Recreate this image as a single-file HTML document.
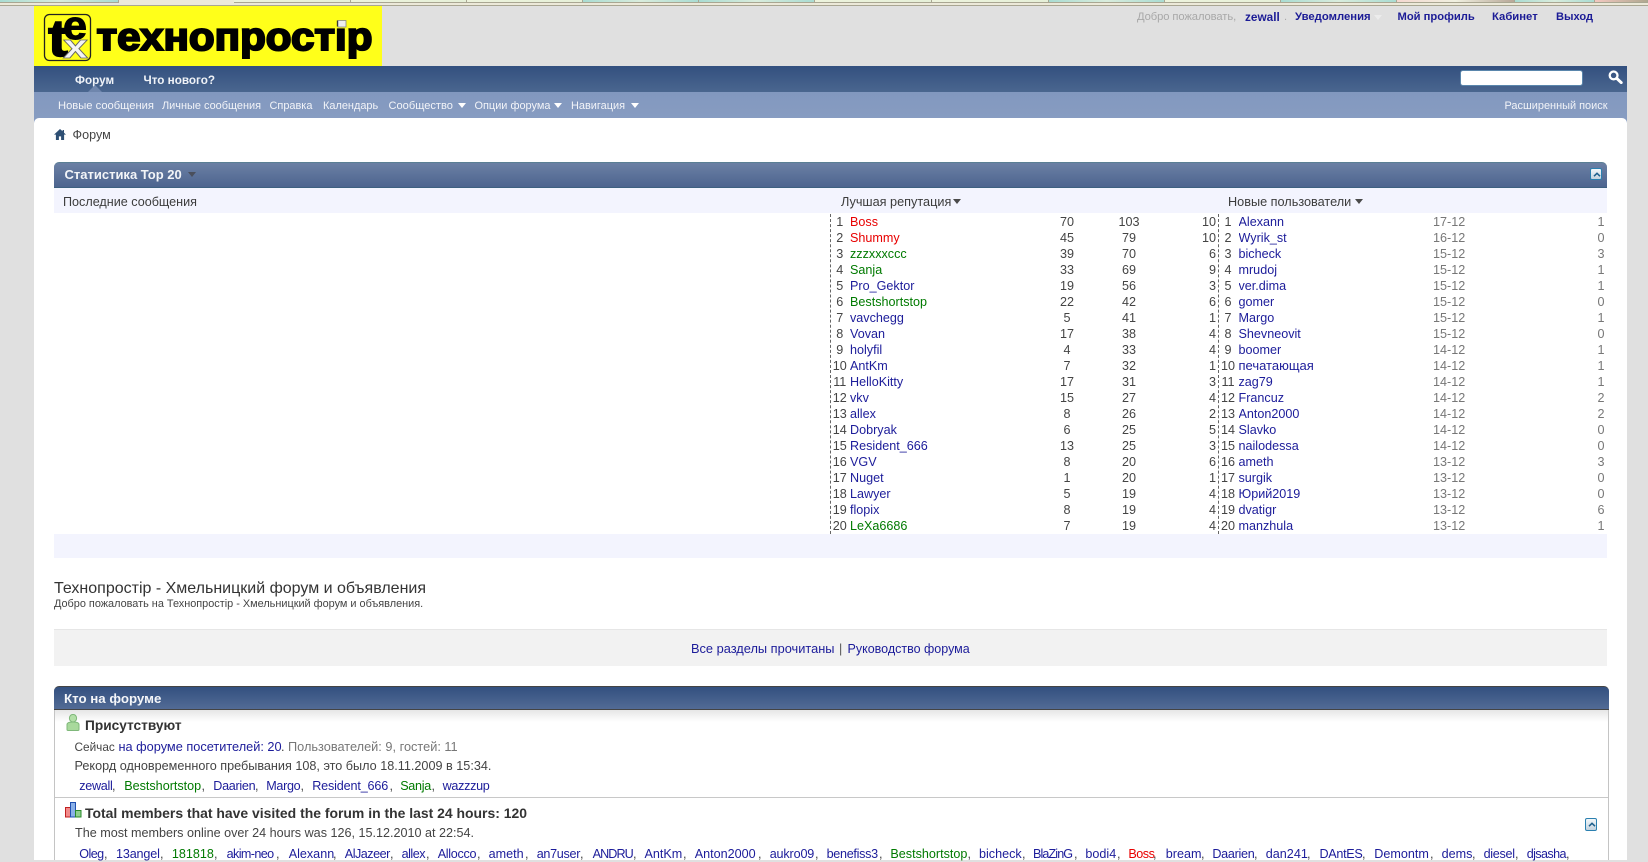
<!DOCTYPE html>
<html lang="ru"><head><meta charset="utf-8"><title>Технопростір - Хмельницкий форум и объявления</title>
<style>
html,body{margin:0;padding:0;width:1648px;height:860px;overflow:hidden;background:#e0e0e0;font-family:"Liberation Sans","Noto Sans CJK SC",sans-serif;font-size:12.6px;color:#444}
*{box-sizing:border-box}
a{color:#1c1c9a;text-decoration:none}
.g{color:#007a00}.r{color:#e80000}
.b{position:absolute}
.t{position:absolute;white-space:nowrap;line-height:16px;height:16px}
.m{letter-spacing:-.3px}
.mm{letter-spacing:-.9px}
#strip{position:absolute;left:0;top:0;width:1648px;height:6px;background:#ece9d9;border-bottom:1px solid #a9a692}
#strip i{position:absolute;top:0;height:3px;border-bottom:1px solid #a9a692;border-right:1px solid #a9a692}
.te{background:linear-gradient(90deg,#a9dcd2,#d9ecdc 50%,#a9dcd2)}
.pa{background:linear-gradient(90deg,#edf3dc,#e6f0d8)}
#nav{left:34px;top:66px;width:1593px;height:26px;background:linear-gradient(#33507f,#4a668f)}
#sub{left:34px;top:92px;width:1593px;height:26px;background:linear-gradient(#8298bf,#879cc1)}
#wr{left:34px;top:118px;width:1593px;height:742px;background:#fff;border-radius:5px 5px 0 0}
#wb{left:34px;top:116px;width:1593px;height:8px;background:#879cc1}
.n{font-weight:bold;color:#f0f3f8;font-size:11.7px}
.s{color:#f2f4f8;font-size:10.95px}
.tri{position:absolute;width:0;height:0;border-left:4px solid transparent;border-right:4px solid transparent;border-top:5px solid #fff}
.top{font-weight:bold;color:#1c1c96;font-size:11.2px}
table{position:absolute;border-collapse:collapse;table-layout:fixed;font-size:12.6px}
td{padding:0;height:16px;line-height:16px;white-space:nowrap;overflow:hidden}
.c{text-align:center}.rt{text-align:right}
#t1 td:first-child,#t2 td:first-child{text-align:center}
.dl{position:absolute;top:214px;height:320px;width:0;border-left:1px dashed #666}
.gr td{color:#777}.gr td a{color:#1c1c9a}.gr td:first-child{color:#444}
.col{position:absolute;width:12px;height:12px;border:1px solid #2b80b0;border-radius:2px;background:linear-gradient(#f2f7fa,#c4d3df)}
.col svg{position:absolute;left:1px;top:1px}
</style></head><body>

<div id="strip">
<i class="te" style="left:0;width:119px"></i>
<i class="pa" style="left:234px;width:117px"></i><i class="pa" style="left:351px;width:116px"></i><i class="pa" style="left:467px;width:116px"></i>
<i class="te" style="left:583px;width:116px"></i><i class="te" style="left:699px;width:116px"></i><i class="pa" style="left:815px;width:117px"></i>
<i class="pa" style="left:932px;width:117px"></i><i class="te" style="left:1049px;width:116px"></i><i class="pa" style="left:1165px;width:116px"></i>
<i class="te" style="left:1281px;width:116px"></i><i style="left:1397px;width:118px;background:linear-gradient(90deg,#f4d8d0,#f0f0e0 50%,#b8a898)"></i>
<i class="te" style="left:1515px;width:80px"></i><i style="left:1595px;width:53px;background:linear-gradient(90deg,#f3c8c0,#b0a890)"></i>
</div>

<svg class="b" style="left:34px;top:6px" width="348" height="60" viewBox="34 6 348 60">
<rect x="34" y="6" width="348" height="60" fill="#ffff1a"/>
<rect x="44.5" y="14.5" width="46" height="46" rx="5" fill="#ffff1a" stroke="#222" stroke-width="1.3"/>
<text x="48" y="56" font-family="Liberation Sans" font-weight="bold" font-size="52" textLength="20" lengthAdjust="spacingAndGlyphs" stroke="#000" stroke-width="1.4" fill="#000">t</text>
<text x="63" y="39" font-family="Liberation Sans" font-weight="bold" font-size="40" textLength="24" lengthAdjust="spacingAndGlyphs" stroke="#000" stroke-width="1" fill="#000">e</text>
<text x="63" y="58" font-family="Liberation Sans" font-weight="bold" font-size="34" textLength="25" lengthAdjust="spacingAndGlyphs" stroke="#666" stroke-width=".8" fill="#f4f4f4">x</text>
<text x="96.5" y="50" font-family="Liberation Sans" font-weight="bold" font-size="39" textLength="276" lengthAdjust="spacingAndGlyphs" stroke="#000" stroke-width="2" fill="#000">технопростір</text>
<rect x="338" y="20.5" width="8" height="6.5" fill="#eee" stroke="#888" stroke-width=".8"/>
<rect x="337" y="15" width="10" height="5" fill="#ffff1a"/>
</svg>

<span class="t" style="left:1137px;top:9px;color:#a8a8a8;font-size:11.2px;letter-spacing:-.08px">Добро пожаловать,</span>
<a class="t top" style="left:1245px;top:9px;font-size:11.8px" href="#">zewall</a>
<span class="t" style="left:1284px;top:9px;color:#aaa;font-size:11px">.</span>
<a class="t top" style="left:1295px;top:9px;font-size:11.3px" href="#">Уведомления</a>
<span class="tri" style="left:1374px;top:15px;border-top-color:#ececec"></span>
<a class="t top" style="left:1397.5px;top:9px" href="#">Мой профиль</a>
<a class="t top" style="left:1492px;top:9px;font-size:11.3px" href="#">Кабинет</a>
<a class="t top" style="left:1556px;top:9px;font-size:11.1px" href="#">Выход</a>

<div class="b" id="wb"></div>
<div class="b" id="nav"></div>
<div class="b" id="sub"></div>
<div class="b" id="wr"></div>

<span class="t n" style="left:75px;top:73px">Форум</span>
<span class="t n" style="left:143.5px;top:73px">Что нового?</span>
<span class="tri" style="left:88px;top:85px;border-left-width:7px;border-right-width:7px;border-top:0;border-bottom:7px solid #6f86ad"></span>

<span class="t s" style="left:58px;top:98px;font-size:11.2px">Новые сообщения</span>
<span class="t s" style="left:162px;top:98px">Личные сообщения</span>
<span class="t s" style="left:269.5px;top:98px">Справка</span>
<span class="t s" style="left:323px;top:98px">Календарь</span>
<span class="t s" style="left:388.5px;top:98px;font-size:11.1px">Сообщество</span>
<span class="tri" style="left:458px;top:103px"></span>
<span class="t s" style="left:474.5px;top:98px">Опции форума</span>
<span class="tri" style="left:554px;top:103px"></span>
<span class="t s" style="left:571px;top:98px">Навигация</span>
<span class="tri" style="left:630.5px;top:103px"></span>
<span class="t s" style="left:1504.5px;top:98px">Расширенный поиск</span>

<div class="b" style="left:1460px;top:70px;width:123px;height:16px;background:#fff;border-radius:3px;border:1px solid #5a86ac"></div>
<svg class="b" style="left:1608px;top:70px" width="15" height="14" viewBox="0 0 15 14"><circle cx="5.6" cy="5.4" r="3.9" fill="none" stroke="#fff" stroke-width="2.3"/><path d="M8.8 8.4L13.2 12.6" stroke="#fff" stroke-width="3" stroke-linecap="round"/></svg>

<svg class="b" style="left:54px;top:129px" width="12" height="11" viewBox="0 0 12 11"><path d="M6 0L0 5.6h1.9V11h3V7.4h2.2V11h3V5.6H12L10 3.7V1H8.6v1.3z" fill="#2e4f74"/></svg>
<span class="t" style="left:72.5px;top:127px;color:#444">Форум</span>

<div class="b" style="left:54px;top:162px;width:1553px;height:26px;border-radius:5px 5px 0 0;background:linear-gradient(#6b80a4,#4d648f);border-top:1px solid #5a7f94;border-bottom:1px solid #3d6080"></div>
<span class="t" style="left:64.5px;top:167px;color:#f3f5f8;font-weight:bold;font-size:13px">Статистика Top 20</span>
<span class="tri" style="left:188px;top:172px;border-top-color:#4a4f5c"></span>
<div class="col" style="left:1589.5px;top:168px"><svg width="10" height="10" viewBox="0 0 10 10"><path d="M2 6.2L5 3.3l3 2.9" fill="none" stroke="#1d5f8c" stroke-width="1.5"/></svg></div>

<div class="b" style="left:54px;top:188px;width:1553px;height:25px;background:#f3f4fe"></div>
<span class="t" style="left:63px;top:194px;color:#3c3c3c;font-size:12.6px">Последние сообщения</span>
<span class="t" style="left:841px;top:194px;color:#3c3c3c;font-size:12.7px">Лучшая репутация</span>
<span class="tri" style="left:953px;top:199px;border-top-color:#4a4a4a"></span>
<span class="t" style="left:1228px;top:194px;color:#3c3c3c;font-size:12.7px">Новые пользователи</span>
<span class="tri" style="left:1354.5px;top:199px;border-top-color:#4a4a4a"></span>

<div class="dl" style="left:830px"></div>
<div class="dl" style="left:1218px"></div>

<table id="t1" style="left:829.5px;top:214px;width:386.5px">
<colgroup><col style="width:20.5px"><col style="width:187px"><col style="width:60px"><col style="width:64px"><col style="width:55px"></colgroup>
<tr><td>1</td><td><a class="r" href="#">Boss</a></td><td class="c">70</td><td class="c">103</td><td class="rt">10</td></tr>
<tr><td>2</td><td><a class="r" href="#">Shummy</a></td><td class="c">45</td><td class="c">79</td><td class="rt">10</td></tr>
<tr><td>3</td><td><a class="g" href="#">zzzxxxccc</a></td><td class="c">39</td><td class="c">70</td><td class="rt">6</td></tr>
<tr><td>4</td><td><a class="g" href="#">Sanja</a></td><td class="c">33</td><td class="c">69</td><td class="rt">9</td></tr>
<tr><td>5</td><td><a href="#">Pro_Gektor</a></td><td class="c">19</td><td class="c">56</td><td class="rt">3</td></tr>
<tr><td>6</td><td><a class="g" href="#">Bestshortstop</a></td><td class="c">22</td><td class="c">42</td><td class="rt">6</td></tr>
<tr><td>7</td><td><a href="#">vavchegg</a></td><td class="c">5</td><td class="c">41</td><td class="rt">1</td></tr>
<tr><td>8</td><td><a href="#">Vovan</a></td><td class="c">17</td><td class="c">38</td><td class="rt">4</td></tr>
<tr><td>9</td><td><a href="#">holyfil</a></td><td class="c">4</td><td class="c">33</td><td class="rt">4</td></tr>
<tr><td>10</td><td><a href="#">AntKm</a></td><td class="c">7</td><td class="c">32</td><td class="rt">1</td></tr>
<tr><td>11</td><td><a href="#">HelloKitty</a></td><td class="c">17</td><td class="c">31</td><td class="rt">3</td></tr>
<tr><td>12</td><td><a href="#">vkv</a></td><td class="c">15</td><td class="c">27</td><td class="rt">4</td></tr>
<tr><td>13</td><td><a href="#">allex</a></td><td class="c">8</td><td class="c">26</td><td class="rt">2</td></tr>
<tr><td>14</td><td><a href="#">Dobryak</a></td><td class="c">6</td><td class="c">25</td><td class="rt">5</td></tr>
<tr><td>15</td><td><a href="#">Resident_666</a></td><td class="c">13</td><td class="c">25</td><td class="rt">3</td></tr>
<tr><td>16</td><td><a href="#">VGV</a></td><td class="c">8</td><td class="c">20</td><td class="rt">6</td></tr>
<tr><td>17</td><td><a href="#">Nuget</a></td><td class="c">1</td><td class="c">20</td><td class="rt">1</td></tr>
<tr><td>18</td><td><a href="#">Lawyer</a></td><td class="c">5</td><td class="c">19</td><td class="rt">4</td></tr>
<tr><td>19</td><td><a href="#">flopix</a></td><td class="c">8</td><td class="c">19</td><td class="rt">4</td></tr>
<tr><td>20</td><td><a class="g" href="#">LeXa6686</a></td><td class="c">7</td><td class="c">19</td><td class="rt">4</td></tr>
</table>

<table id="t2" class="gr" style="left:1217.5px;top:214px;width:387px">
<colgroup><col style="width:21px"><col style="width:194.5px"><col style="width:80px"><col style="width:91.5px"></colgroup>
<tr><td>1</td><td><a href="#">Alexann</a></td><td>17-12</td><td class="rt">1</td></tr>
<tr><td>2</td><td><a href="#">Wyrik_st</a></td><td>16-12</td><td class="rt">0</td></tr>
<tr><td>3</td><td><a href="#">bicheck</a></td><td>15-12</td><td class="rt">3</td></tr>
<tr><td>4</td><td><a href="#">mrudoj</a></td><td>15-12</td><td class="rt">1</td></tr>
<tr><td>5</td><td><a href="#">ver.dima</a></td><td>15-12</td><td class="rt">1</td></tr>
<tr><td>6</td><td><a href="#">gomer</a></td><td>15-12</td><td class="rt">0</td></tr>
<tr><td>7</td><td><a href="#">Margo</a></td><td>15-12</td><td class="rt">1</td></tr>
<tr><td>8</td><td><a href="#">Shevneovit</a></td><td>15-12</td><td class="rt">0</td></tr>
<tr><td>9</td><td><a href="#">boomer</a></td><td>14-12</td><td class="rt">1</td></tr>
<tr><td>10</td><td><a href="#" style="font-size:13px">печатающая</a></td><td>14-12</td><td class="rt">1</td></tr>
<tr><td>11</td><td><a href="#">zag79</a></td><td>14-12</td><td class="rt">1</td></tr>
<tr><td>12</td><td><a href="#">Francuz</a></td><td>14-12</td><td class="rt">2</td></tr>
<tr><td>13</td><td><a href="#">Anton2000</a></td><td>14-12</td><td class="rt">2</td></tr>
<tr><td>14</td><td><a href="#">Slavko</a></td><td>14-12</td><td class="rt">0</td></tr>
<tr><td>15</td><td><a href="#">nailodessa</a></td><td>14-12</td><td class="rt">0</td></tr>
<tr><td>16</td><td><a href="#">ameth</a></td><td>13-12</td><td class="rt">3</td></tr>
<tr><td>17</td><td><a href="#">surgik</a></td><td>13-12</td><td class="rt">0</td></tr>
<tr><td>18</td><td><a href="#">Юрий2019</a></td><td>13-12</td><td class="rt">0</td></tr>
<tr><td>19</td><td><a href="#">dvatigr</a></td><td>13-12</td><td class="rt">6</td></tr>
<tr><td>20</td><td><a href="#">manzhula</a></td><td>13-12</td><td class="rt">1</td></tr>
</table>

<div class="b" style="left:54px;top:534px;width:1553px;height:24px;background:#f3f4fe"></div>

<span class="t" style="left:54px;top:580px;height:18px;line-height:18px;color:#333;font-size:16px">Технопростір - Хмельницкий форум и объявления</span>
<span class="t" style="left:54px;top:596px;color:#444;font-size:10.9px">Добро пожаловать на Технопростір - Хмельницкий форум и объявления.</span>

<div class="b" style="left:54px;top:629px;width:1553px;height:37px;background:#f2f2f2;border-top:1px solid #e6e6e6"></div>
<a class="t" style="left:691px;top:641px;font-size:12.8px" href="#">Все разделы прочитаны</a>
<span class="t" style="left:839px;top:641px;color:#555">|</span>
<a class="t" style="left:847.5px;top:641px;font-size:12.5px" href="#">Руководство форума</a>

<div class="b" style="left:54px;top:710px;width:1555px;height:150px;border-left:1px solid #c4c4c4;border-right:1px solid #c4c4c4;background:linear-gradient(#e6e6e6,#fff 12px)"></div>
<div class="b" style="left:54px;top:686px;width:1555px;height:24px;border-radius:5px 5px 0 0;background:linear-gradient(#33507f,#526b95);border-top:1px solid #444;border-bottom:1px solid #444"></div>
<span class="t" style="left:64px;top:691px;color:#f4f6f9;font-weight:bold;font-size:13.3px">Кто на форуме</span>

<svg class="b" style="left:66px;top:714px" width="14" height="17" viewBox="0 0 14 17"><ellipse cx="7" cy="4.2" rx="3.6" ry="3.8" fill="#b3dfa8" stroke="#7fb87a"/><path d="M1 15.5V10.6C1 8.6 3 8 7 8s6 .6 6 2.6v4.9c0 .6-.5 1-1 1H2c-.5 0-1-.4-1-1z" fill="#a8d99c" stroke="#7fb87a"/></svg>
<span class="t" style="left:85px;top:718px;color:#333;font-weight:bold;font-size:13.7px">Присутствуют</span>

<span class="t" style="left:74.5px;top:739px;color:#444;font-size:11.8px">Сейчас</span>
<a class="t" style="left:118.5px;top:739px;font-size:12.75px" href="#">на форуме посетителей: 20</a>
<span class="t" style="left:281px;top:739px;color:#444">.</span>
<span class="t" style="left:288px;top:739px;color:#777;font-size:12.75px">Пользователей: 9, гостей: 11</span>
<span class="t" style="left:74.5px;top:758px;color:#444;font-size:12.65px">Рекорд одновременного пребывания 108, это было 18.11.2009 в 15:34.</span>

<a class="t m" style="left:79.3px;top:778px" href="#">zewall</a><span class="t" style="left:112px;top:778px">,</span>
<a class="t g" style="left:124.2px;top:778px" href="#">Bestshortstop</a><span class="t" style="left:201.5px;top:778px">,</span>
<a class="t m" style="left:213.3px;top:778px" href="#">Daarien</a><span class="t" style="left:255px;top:778px">,</span>
<a class="t m" style="left:266.2px;top:778px" href="#">Margo</a><span class="t" style="left:300.5px;top:778px">,</span>
<a class="t" style="left:312.2px;top:778px;letter-spacing:-.15px" href="#">Resident_666</a><span class="t" style="left:389.5px;top:778px">,</span>
<a class="t g m" style="left:400.2px;top:778px" href="#">Sanja</a><span class="t" style="left:431.5px;top:778px">,</span>
<a class="t m" style="left:442.6px;top:778px" href="#">wazzzup</a>

<div class="b" style="left:55px;top:797px;width:1553px;height:1px;background:#c8c8c8"></div>

<svg class="b" style="left:65px;top:802px" width="17" height="16" viewBox="0 0 17 16"><rect x=".5" y="5.5" width="5" height="9.5" fill="#f28a8a" stroke="#c02020"/><rect x="5.5" y=".5" width="5" height="14.5" fill="#8ab0e8" stroke="#2050b0"/><rect x="10.5" y="8.5" width="5.5" height="6.5" fill="#8fd08f" stroke="#2a8a2a"/></svg>
<span class="t" style="left:85px;top:805px;color:#333;font-weight:bold;font-size:13.95px">Total members that have visited the forum in the last 24 hours: 120</span>
<span class="t" style="left:75px;top:825px;color:#444">The most members online over 24 hours was 126, 15.12.2010 at 22:54.</span>
<div class="col" style="left:1585px;top:818px;height:13px"><svg width="10" height="10" viewBox="0 0 10 10"><path d="M2 6.2L5 3.3l3 2.9" fill="none" stroke="#1d5f8c" stroke-width="1.5"/></svg></div>

<a class="t m" style="left:79.3px;top:846px;letter-spacing:-.6px" href="#">Oleg</a><span class="t" style="left:104px;top:846px">,</span>
<a class="t" style="left:116px;top:846px;letter-spacing:-.15px" href="#">13angel</a><span class="t" style="left:160px;top:846px">,</span>
<a class="t g" style="left:171.9px;top:846px" href="#">181818</a><span class="t" style="left:214px;top:846px">,</span>
<a class="t m" style="left:226.6px;top:846px;letter-spacing:-.6px" href="#">akim-neo</a><span class="t" style="left:276px;top:846px">,</span>
<a class="t" style="left:288.7px;top:846px" href="#">Alexann</a><span class="t" style="left:333px;top:846px">,</span>
<a class="t m" style="left:344.8px;top:846px;letter-spacing:-.5px" href="#">AlJazeer</a><span class="t" style="left:390px;top:846px">,</span>
<a class="t m" style="left:401.6px;top:846px;letter-spacing:-.5px" href="#">allex</a><span class="t" style="left:426px;top:846px">,</span>
<a class="t m" style="left:437.7px;top:846px" href="#">Allocco</a><span class="t" style="left:477px;top:846px">,</span>
<a class="t" style="left:488.6px;top:846px" href="#">ameth</a><span class="t" style="left:525px;top:846px">,</span>
<a class="t m" style="left:536.7px;top:846px" href="#">an7user</a><span class="t" style="left:580px;top:846px">,</span>
<a class="t mm" style="left:592.6px;top:846px" href="#">ANDRU</a><span class="t" style="left:633px;top:846px">,</span>
<a class="t" style="left:644.5px;top:846px" href="#">AntKm</a><span class="t" style="left:683px;top:846px">,</span>
<a class="t" style="left:694.7px;top:846px" href="#">Anton2000</a><span class="t" style="left:758px;top:846px">,</span>
<a class="t" style="left:769.7px;top:846px;letter-spacing:-.15px" href="#">aukro09</a><span class="t" style="left:815px;top:846px">,</span>
<a class="t m" style="left:826.6px;top:846px" href="#">benefiss3</a><span class="t" style="left:879px;top:846px">,</span>
<a class="t g" style="left:890.4px;top:846px" href="#">Bestshortstop</a><span class="t" style="left:967.5px;top:846px">,</span>
<a class="t" style="left:979px;top:846px" href="#">bicheck</a><span class="t" style="left:1022px;top:846px">,</span>
<a class="t mm" style="left:1033px;top:846px" href="#">BlaZinG</a><span class="t" style="left:1074px;top:846px">,</span>
<a class="t" style="left:1085.4px;top:846px" href="#">bodi4</a><span class="t" style="left:1117px;top:846px">,</span>
<a class="t r m" style="left:1128.4px;top:846px;letter-spacing:-.5px" href="#">Boss</a><span class="t" style="left:1153px;top:846px">,</span>
<a class="t" style="left:1165.8px;top:846px" href="#">bream</a><span class="t" style="left:1201px;top:846px">,</span>
<a class="t m" style="left:1212.4px;top:846px" href="#">Daarien</a><span class="t" style="left:1254px;top:846px">,</span>
<a class="t" style="left:1265.8px;top:846px" href="#">dan241</a><span class="t" style="left:1307px;top:846px">,</span>
<a class="t m" style="left:1319.5px;top:846px" href="#">DAntES</a><span class="t" style="left:1362px;top:846px">,</span>
<a class="t" style="left:1374.3px;top:846px" href="#">Demontm</a><span class="t" style="left:1430px;top:846px">,</span>
<a class="t" style="left:1441.6px;top:846px" href="#">dems</a><span class="t" style="left:1472px;top:846px">,</span>
<a class="t m" style="left:1483.6px;top:846px" href="#">diesel</a><span class="t" style="left:1515px;top:846px">,</span>
<a class="t m" style="left:1526.7px;top:846px;letter-spacing:-.6px" href="#">djsasha</a><span class="t" style="left:1566px;top:846px">,</span>

</body></html>
